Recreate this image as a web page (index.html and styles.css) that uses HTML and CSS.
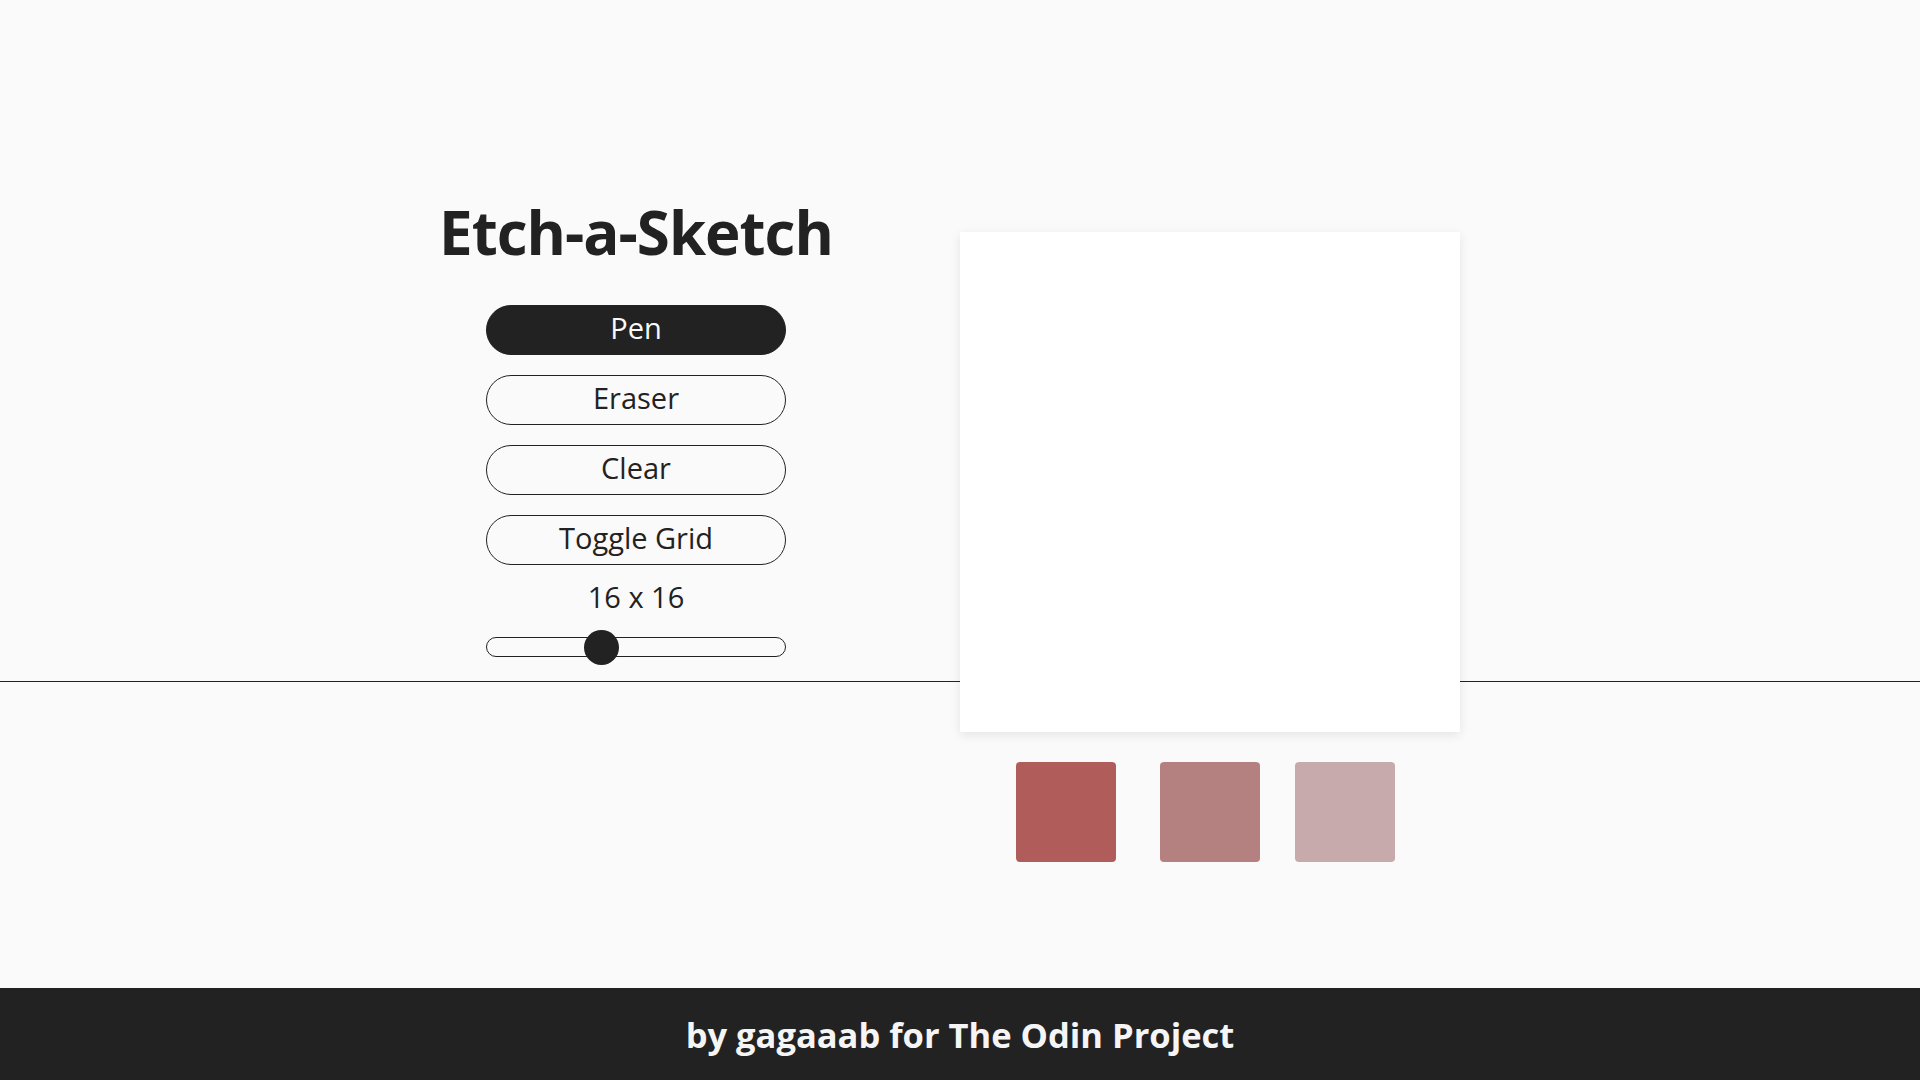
FILE: index.html
```html
<!DOCTYPE html>
<html lang="en">
<head>
<meta charset="utf-8">
<title>Etch-a-Sketch</title>
<link rel="stylesheet" href="styles.css">
</head>
<body>
<div class="page">
  <main class="main">
    <section class="controls">
      <h1 class="title">Etch-a-Sketch</h1>
      <button class="btn btn-active">Pen</button>
      <button class="btn">Eraser</button>
      <button class="btn">Clear</button>
      <button class="btn">Toggle Grid</button>
      <div class="size-label">16 x 16</div>
      <input class="slider" type="range" min="2" max="40" value="16">
    </section>
    <section class="board-col">
      <div class="canvas"></div>
      <div class="swatches">
        <div class="swatch swatch-1"></div>
        <div class="swatch swatch-2"></div>
        <div class="swatch swatch-3"></div>
      </div>
    </section>
  </main>
</div>
<footer class="footer">by gagaaab for The Odin Project</footer>
</body>
</html>
```
FILE: styles.css
```css
* { box-sizing: border-box; }
html, body { margin: 0; padding: 0; }
body {
  width: 1920px;
  height: 1080px;
  overflow: hidden;
  background: #fafafa;
  color: #222222;
  font-family: "Open Sans", "Noto Sans", sans-serif;
  display: flex;
  flex-direction: column;
}
.page {
  height: 988px;
  flex: none;
  background: linear-gradient(to bottom, transparent 681px, #222222 681px, #222222 682px, transparent 682px);
}
.main {
  display: flex;
  align-items: flex-start;
  padding-top: 192px;
  padding-left: 436px;
  gap: 124px;
}
.controls {
  width: 400px;
  display: flex;
  flex-direction: column;
  align-items: center;
}
.title {
  margin: 0 0 33px 0;
  font-size: 60px;
  line-height: 80px;
  font-weight: 700;
  letter-spacing: -1px;
  color: #222222;
}
.btn {
  width: 300px;
  height: 50px;
  margin-bottom: 20px;
  border: 1px solid #222222;
  border-radius: 25px;
  background: transparent;
  color: #222222;
  font-family: inherit;
  font-size: 29px;
  padding: 0 0 6px 0;
  line-height: 1;
}
.btn-active {
  background: #222222;
  color: #fafafa;
}
.size-label {
  font-size: 29px;
  line-height: 40px;
  margin-top: -8px;
  margin-bottom: 20px;
}
.slider {
  -webkit-appearance: none;
  appearance: none;
  width: 300px;
  height: 20px;
  margin: 0;
  border: 1px solid #222222;
  border-radius: 10px;
  background: transparent;
}
.slider::-webkit-slider-runnable-track {
  height: 18px;
  background: transparent;
}
.slider::-webkit-slider-thumb {
  -webkit-appearance: none;
  appearance: none;
  width: 35px;
  height: 35px;
  margin-top: -8.5px;
  border-radius: 50%;
  background: #222222;
  border: none;
}
.board-col {
  width: 500px;
  margin-top: 40px;
}
.canvas {
  width: 500px;
  height: 500px;
  background: #ffffff;
  box-shadow: 0 3px 10px rgba(0, 0, 0, 0.09);
}
.swatches {
  display: flex;
  margin-top: 30px;
  padding-left: 56px;
}
.swatch {
  width: 100px;
  height: 100px;
  border-radius: 4px;
}
.swatch-1 { background: #b05c5a; margin-right: 44px; }
.swatch-2 { background: #b48180; margin-right: 35px; }
.swatch-3 { background: #c7abac; }
.footer {
  height: 92px;
  flex: none;
  background: #222222;
  color: #f5f5f5;
  font-size: 34.5px;
  font-weight: 700;
  display: flex;
  align-items: center;
  justify-content: center;
  padding-top: 1px;
}
```
